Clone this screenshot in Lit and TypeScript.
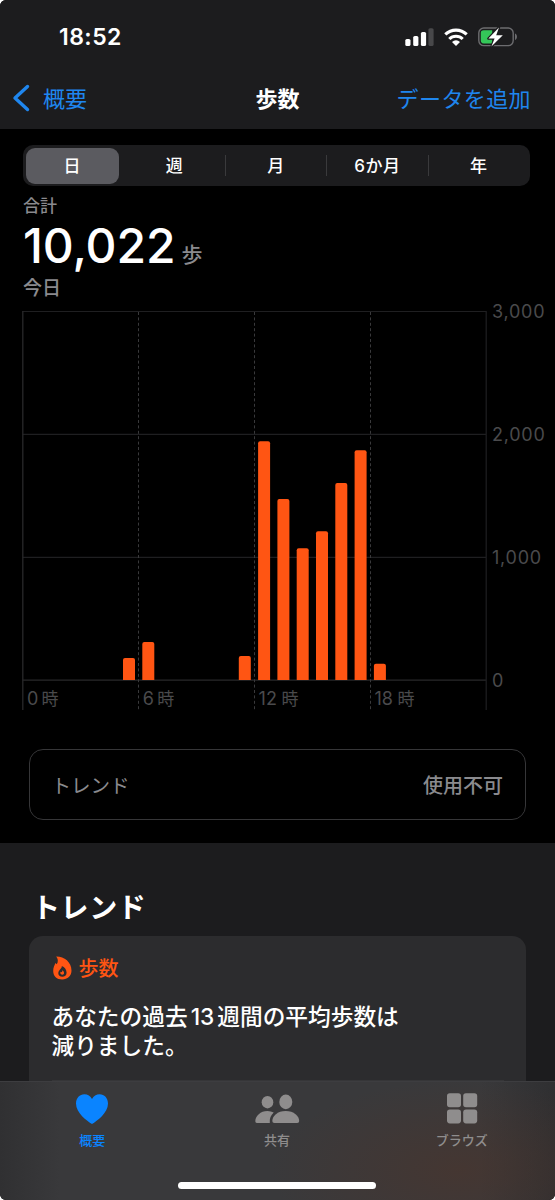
import { LitElement, html, svg, css } from "lit";
import { customElement, state } from "lit/decorators.js";

interface HourSteps {
  hour: number;
  steps: number;
}

const PERIODS = ["日", "週", "月", "6か月", "年"];

const STEPS: HourSteps[] = [
  { hour: 5, steps: 179 },
  { hour: 6, steps: 309 },
  { hour: 11, steps: 195 },
  { hour: 12, steps: 1943 },
  { hour: 13, steps: 1472 },
  { hour: 14, steps: 1073 },
  { hour: 15, steps: 1211 },
  { hour: 16, steps: 1602 },
  { hour: 17, steps: 1870 },
  { hour: 18, steps: 132 },
];

@customElement("status-bar")
class StatusBar extends LitElement {
  static styles = css`
    :host {
      display: flex;
      justify-content: space-between;
      align-items: center;
      height: 74px;
      padding: 0 38px 0 59px;
    }
    .time {
      font: 600 23px/26px Inter, sans-serif;
      letter-spacing: 0.45px;
      color: #fff;
    }
    svg {
      display: block;
    }
  `;
  render() {
    return html`
      <span class="time">18:52</span>
      <svg width="112" height="22" viewBox="405 26 112 22">
        <g fill="#fff">
          <rect x="405.3" y="39" width="5.2" height="7" rx="1.6" />
          <rect x="413.2" y="36" width="5.2" height="10" rx="1.6" />
          <rect x="420.9" y="32" width="5.2" height="14" rx="1.6" />
          <rect x="428.4" y="28.2" width="5.2" height="17.8" rx="1.6" fill="#48484a" />
        </g>
        <g fill="none" stroke="#fff" stroke-width="3.1">
          <path d="M445.3 34.4a15.4 15.4 0 0 1 21.4 0" />
          <path d="M449.3 39a9.5 9.5 0 0 1 13.4 0" />
        </g>
        <path d="M452 41.9a6 6 0 0 1 8 0l-4 4z" fill="#fff" />
        <rect x="478.8" y="28" width="34.4" height="17.6" rx="5" fill="none" stroke="#6c6c6f" stroke-width="1.4" />
        <path d="M483.6 30.2h8.600v13.200h-8.600a2.800 2.800 0 0 1-2.800-2.800v-7.600a2.800 2.800 0 0 1 2.800-2.800z" fill="#34c759" />
        <path d="M515 33.6c2.600 1 2.600 5.400 0 6.400z" fill="#6c6c6f" />
        <path
          d="M499 27.4l-10.600 11.200h6.200l-3.200 8 11.400-11.400h-6.600z"
          fill="#fff"
          stroke="#1c1c1e"
          stroke-width="2.4"
          stroke-linejoin="round"
          paint-order="stroke"
        />
      </svg>
    `;
  }
}

@customElement("step-chart")
class StepChart extends LitElement {
  static styles = css`
    :host {
      display: block;
      flex: none;
      height: 415px;
    }
    svg {
      display: block;
    }
    .label {
      font-family: Inter, "Noto Sans CJK JP", sans-serif;
      font-size: 18px;
      fill: #4a4a4c;
    }
    .value {
      letter-spacing: 0.75px;
    }
    .hour {
      font-size: 17px;
    }
    .grid {
      stroke: #1f1f21;
      stroke-width: 1.2;
    }
    .base {
      stroke: #28282a;
      stroke-width: 1.3;
    }
    .dash {
      stroke: #39393b;
      stroke-width: 1;
      stroke-dasharray: 3 2.4;
    }
    .bar {
      fill: #ff5513;
    }
  `;

  private y(value: number) {
    return 680 - value * 0.1229;
  }

  private bar({ hour, steps }: HourSteps) {
    const x = 26.5 + hour * 19.3;
    const top = this.y(steps);
    return svg`<path class="bar" d="M${x} 680V${top + 2}q0-2 2-2h8q2 0 2 2V680z" />`;
  }

  render() {
    return html`
      <svg width="555" height="415" viewBox="0 296 555 415">
        ${[3000, 2000, 1000].map(
          (v) => svg`<line class="grid" x1="22.5" x2="486" y1=${this.y(v) + 0.2} y2=${this.y(v) + 0.2} />`,
        )}
        <line class="base" x1="22.5" x2="486" y1="680.2" y2="680.2" />
        <line class="base" x1="22.8" x2="22.8" y1="311" y2="710" />
        <line class="grid" x1="486.2" x2="486.2" y1="311" y2="710" />
        ${[138.5, 254.5, 370.5].map((x) => svg`<line class="dash" x1=${x} x2=${x} y1="312" y2="710" />`)}
        ${STEPS.map((s) => this.bar(s))}
        ${[3000, 2000, 1000, 0].map(
          (v) =>
            svg`<text class="label value" x="492" y=${this.y(v) + 6.6}>${v.toLocaleString("en-US")}</text>`,
        )}
        ${[0, 6, 12, 18].map(
          (h, i) => svg`
            <text class="label" x=${27 + i * 115.8} y="705">${h}</text>
            <text class="label hour" x=${(h > 9 ? 50 : 41.5) + i * 115.8} y="705">時</text>`,
        )}
      </svg>
    `;
  }
}

@customElement("tab-bar")
class TabBar extends LitElement {
  static styles = css`
    :host {
      display: grid;
      grid-template-columns: repeat(3, 1fr);
      align-content: start;
      flex: none;
      box-sizing: border-box;
      height: 119px;
      padding: 9px 1px 0 0;
      border-top: 1px solid #3d3d40;
      background:
        radial-gradient(ellipse 190px 90px at 460px 88px, rgba(78, 52, 42, 0.55), rgba(78, 52, 42, 0)),
        linear-gradient(90deg, #303032 0, #39393b 60px, #39393b 480px, #2f2f31 555px);
    }
    .tab {
      display: flex;
      flex-direction: column;
      align-items: center;
      font: 500 13px/20px "Noto Sans CJK JP", sans-serif;
      color: #8f8d8d;
    }
    .active {
      color: #0a84ff;
    }
    svg {
      display: block;
      fill: currentColor;
      margin-bottom: 5px;
    }
    .home {
      grid-column: 1 / -1;
      justify-self: center;
      width: 198px;
      height: 7.5px;
      margin-top: 31.5px;
      border-radius: 4px;
      background: #fff;
    }
  `;
  render() {
    return html`
      <div class="tab active">
        <svg width="46" height="34" viewBox="0 0 46 34">
          <path
            d="M23 33C18 30 7 22 7 12.500C7 7 10.700 3.200 15.300 3.200C18.700 3.200 21.500 5 23 7.900C24.500 5 27.300 3.200 30.700 3.200C35.300 3.200 39 7 39 12.500C39 22 28 30 23 33z"
          />
        </svg>
        概要
      </div>
      <div class="tab">
        <svg width="46" height="34" viewBox="0 0 46 34">
          <ellipse cx="13.500" cy="11.200" rx="5.800" ry="6.200" />
          <path d="M2.800 32Q1.300 32 1.300 30.300C1.300 25 6.500 20 13.500 20Q17 20 19.700 21.500C16.800 24.200 15.400 27.500 15.800 32z" />
          <ellipse cx="31.800" cy="10.900" rx="6.500" ry="7.300" />
          <path d="M20.300 32Q18.300 32 18.300 30C18.300 25 23.500 20 31.700 20S45.200 25 45.200 30Q45.200 32 43.200 32z" />
        </svg>
        共有
      </div>
      <div class="tab">
        <svg width="46" height="34" viewBox="0 0 46 34">
          <rect x="8" y="2.300" width="14" height="14" rx="2.800" />
          <rect x="24.200" y="2.300" width="14" height="14" rx="2.800" />
          <rect x="8" y="18.400" width="14" height="14" rx="2.800" />
          <rect x="24.200" y="18.400" width="14" height="14" rx="2.800" />
        </svg>
        ブラウズ
      </div>
      <div class="home"></div>
    `;
  }
}

@customElement("app-root")
class AppRoot extends LitElement {
  static styles = css`
    :host {
      display: block;
      width: 555px;
      height: 1200px;
      background: #fff;
      font-family: Inter, "Noto Sans CJK JP", sans-serif;
      color: #fff;
    }
    .screen {
      display: flex;
      flex-direction: column;
      height: 1200px;
      overflow: hidden;
      border-radius: 6px;
      background: #000;
    }
    .header {
      height: 129px;
      flex: none;
      background: #1c1c1e;
    }
    .nav {
      display: grid;
      grid-template-columns: 1fr auto 1fr;
      align-items: center;
      height: 48px;
      padding: 0 24px 0 12px;
      font: 400 22px/30px "Noto Sans CJK JP", sans-serif;
      color: #1f86ee;
    }
    .back {
      display: flex;
      align-items: center;
      gap: 13px;
    }
    .title,
    .label,
    .add {
      padding-bottom: 2px;
    }
    .title {
      margin-left: 12px;
      color: #fff;
      font-weight: 700;
    }
    .add {
      text-align: right;
      letter-spacing: 0.4px;
    }
    .segments {
      display: grid;
      grid-template-columns: repeat(5, 1fr);
      box-sizing: border-box;
      height: 41px;
      flex: none;
      margin: 16px 25px 0 23px;
      border-radius: 10px;
      background: #1c1c1e;
    }
    .segment {
      display: flex;
      align-items: center;
      justify-content: center;
      padding-right: 1px;
      letter-spacing: 0.6px;
      font: 500 17px/22px Inter, "Noto Sans CJK JP", sans-serif;
    }
    .segment.on {
      margin: 2.5px 5px 2.5px 3px;
      border-radius: 9px;
      background: #5b5b60;
    }
    .segment.divided {
      background: linear-gradient(#3a3a3c, #3a3a3c) right center / 1px 21px no-repeat;
    }
    .summary {
      padding-left: 23px;
      flex: none;
      height: 110px;
      box-sizing: border-box;
      color: #8a8a8e;
      font-family: "Noto Sans CJK JP", sans-serif;
      font-weight: 500;
    }
    .caption {
      padding-top: 8px;
      font-size: 17px;
      line-height: 22px;
    }
    .total {
      display: flex;
      align-items: baseline;
      gap: 6px;
      height: 57px;
      padding-top: 1px;
      line-height: 58px;
      font-size: 21px;
    }
    .number {
      font: 500 48px/58px Inter, sans-serif;
      letter-spacing: -0.1px;
      color: #fff;
    }
    .unit {
      position: relative;
      top: -1px;
    }
    .today {
      font-size: 19px;
      line-height: 26px;
    }
    .trend {
      display: flex;
      justify-content: space-between;
      align-items: center;
      flex: none;
      box-sizing: border-box;
      height: 71px;
      margin: 38px 29px 23px 28.5px;
      padding: 0 22px;
      border: 1.5px solid #363638;
      border-radius: 14px;
      font: 400 19.5px/28px "Noto Sans CJK JP", sans-serif;
      color: #8a8a8e;
    }
    .unavailable {
      font-size: 20px;
      font-weight: 500;
    }
    .highlights {
      flex: none;
      height: 238px;
      overflow: hidden;
      background: #1c1c1e;
    }
    .heading {
      margin: 0;
      padding: 43px 0 10px 32px;
      font: 700 28px/40px "Noto Sans CJK JP", sans-serif;
      letter-spacing: 0.6px;
    }
    .card {
      display: flex;
      flex-direction: column;
      box-sizing: border-box;
      height: 145px;
      margin: 0 29.500px 0 29px;
      padding: 18px 22px 0 23px;
      border-radius: 14px 14px 0 0;
      background: #2c2c2e;
    }
    .metric {
      display: flex;
      align-items: center;
      gap: 6.5px;
      height: 28px;
      font: 500 20px/28px "Noto Sans CJK JP", sans-serif;
      color: #ff5513;
    }
    .metric svg {
      fill: currentColor;
    }
    .message {
      margin: 20px 0 0 -0.500px;
      font: 500 22.700px/29px Inter, "Noto Sans CJK JP", sans-serif;
      white-space: nowrap;
    }
    .divider {
      height: 1px;
      margin-top: auto;
      background: #363638;
    }
    .num {
      margin: 0 3px;
    }
    svg {
      display: block;
    }
  `;

  @state() private selected = 0;

  render() {
    return html`
      <div class="screen">
        <div class="header">
          <status-bar></status-bar>
          <div class="nav">
            <span class="back">
              <svg width="18" height="28" viewBox="0 0 18 28">
                <path
                  d="M15.500 2.500L3 14l12.500 11.500"
                  fill="none"
                  stroke="currentColor"
                  stroke-width="3.400"
                  stroke-linecap="round"
                  stroke-linejoin="round"
                />
              </svg>
              <span class="label">概要</span>
            </span>
            <span class="title">歩数</span>
            <span class="add">データを追加</span>
          </div>
        </div>
        <div class="segments">
          ${PERIODS.map(
            (p, i) => html`<div
              class="segment ${i === this.selected ? "on" : i > 0 && i < 4 ? "divided" : ""}"
              @click=${() => (this.selected = i)}
            >
              ${p}
            </div>`,
          )}
        </div>
        <div class="summary">
          <div class="caption">合計</div>
          <div class="total"><span class="number">10,022</span><span class="unit">歩</span></div>
          <div class="today">今日</div>
        </div>
        <step-chart></step-chart>
        <div class="trend"><span>トレンド</span><span class="unavailable">使用不可</span></div>
        <div class="highlights">
          <h2 class="heading">トレンド</h2>
          <div class="card">
            <div class="metric">
              <svg width="20" height="24" viewBox="0 0 20 24">
                <path
                  fill-rule="evenodd"
                  d="M4.200 0.500C12 0.300 19.500 6 19.500 14.500C19.500 20 15.500 23.500 10.300 23.500C4.800 23.500 1.200 20 1.200 15C1.200 11 2.500 9.500 3.500 7L4.800 8.300C6.500 5.500 6 2.500 4.200 0.500zM9.800 10C10.200 12.500 6.300 14 6.300 17.300C6.300 19.500 8 20.800 10.300 20.800C12.700 20.800 14.600 19.300 14.600 16.800C14.600 13.500 12.500 11 9.800 10z"
                />
                <path d="M10.200 14.200C12.300 15 13 18.600 10.400 18.700C8 18.600 8 16.500 8.800 15.800L9.700 16.300Q10.500 15.500 10.200 14.200z" />
              </svg>
              歩数
            </div>
            <p class="message">あなたの過去<span class="num">13</span>週間の平均歩数は<br />減りました。</p>
            <div class="divider"></div>
          </div>
        </div>
        <tab-bar></tab-bar>
      </div>
    `;
  }
}
